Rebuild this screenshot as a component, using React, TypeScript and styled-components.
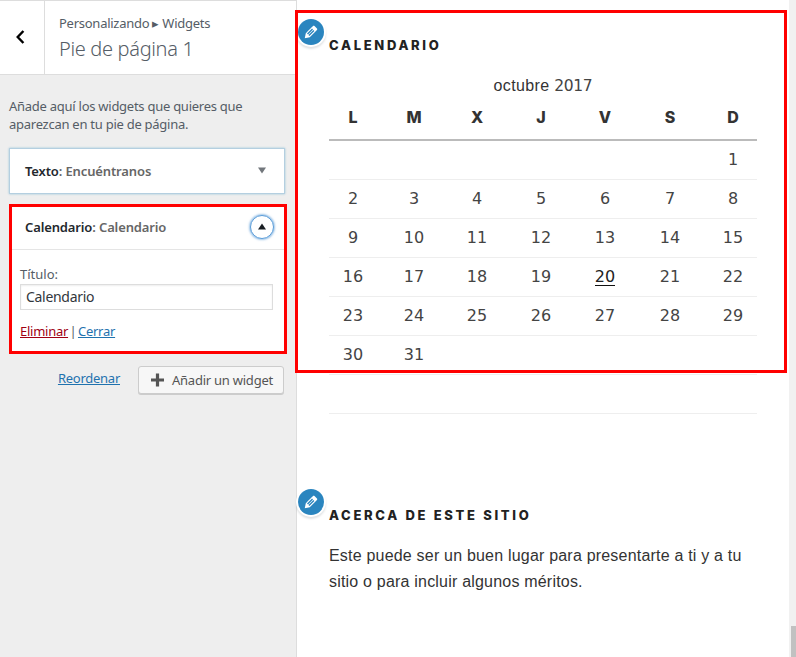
import React from "react";
import styled, { createGlobalStyle } from "styled-components";

const GlobalStyle = createGlobalStyle`
  *, *::before, *::after { box-sizing: border-box; }
  body { margin: 0; background: #fff; overflow: hidden; }
`;

const Page = styled.div`
  display: flex;
  width: 796px;
  height: 657px;
`;

const Sidebar = styled.aside`
  display: flex;
  flex-direction: column;
  width: 297px;
  flex: none;
  background: #eee;
  border-right: 1px solid #ddd;
  color: #555d66;
  font: 13px/18px "Noto Sans", "Open Sans", sans-serif;
  letter-spacing: -0.26px;
`;

const PanelHeader = styled.header`
  display: flex;
  height: 75px;
  flex: none;
  background: #fff;
  border: solid #ddd;
  border-width: 1px 0;
`;

const BackButton = styled.button`
  display: flex;
  align-items: center;
  width: 45px;
  padding: 0 0 2px 15px;
  background: #fff;
  border: 0;
  border-right: 1px solid #ddd;
`;

const PanelTitle = styled.div`
  padding: 13px 14px 0;
  white-space: nowrap;
`;

const PanelName = styled.h1`
  margin: 4px 0 0;
  font-size: 20px;
  font-weight: 300;
  line-height: 26px;
  letter-spacing: -0.33px;
`;

const Description = styled.p`
  margin: 22px 9px 15px;
  height: 36px;
  white-space: nowrap;
`;

const WidgetList = styled.div`
  display: flex;
  flex-direction: column;
  gap: 10px;
  padding-left: 9px;
`;

const WidgetCard = styled.section<{ $highlighted?: boolean }>`
  position: relative;
  width: 276px;
  background: #fff;
  border: 1px solid ${(p) => (p.$highlighted ? "#e5e5e5" : "#b4cfe0")};
  box-shadow: ${(p) => (p.$highlighted ? "none" : "0 0 2px rgba(30, 140, 190, 0.4)")};
`;

const MarkFrame = styled.div<{ $inset: string }>`
  position: absolute;
  inset: ${(p) => p.$inset};
  border: 3px solid #f00;
  pointer-events: none;
`;

const WidgetTop = styled.div<{ $open?: boolean }>`
  display: flex;
  align-items: center;
  justify-content: space-between;
  height: ${(p) => (p.$open ? "45px" : "44px")};
  padding: 0 10px 0 15px;
  border-bottom: ${(p) => (p.$open ? "1px solid #e5e5e5" : "0")};
`;

const WidgetName = styled.h2`
  margin: 0;
  font-size: 13px;
  font-weight: 600;
  color: #23282d;
  letter-spacing: -0.13px;
`;

const WidgetInstance = styled.span`
  color: #666;
`;

const Toggle = styled.button<{ $open?: boolean }>`
  display: flex;
  align-items: center;
  justify-content: center;
  width: 24px;
  height: 24px;
  padding: 0 0 1px;
  border-radius: 50%;
  background: ${(p) => (p.$open ? "#fff" : "none")};
  border: 1px solid ${(p) => (p.$open ? "#5b9dd9" : "transparent")};
  box-shadow: ${(p) => (p.$open ? "0 0 2px 1px rgba(91, 157, 217, 0.6)" : "none")};
`;

const WidgetForm = styled.div`
  display: flex;
  flex-direction: column;
  height: 101px;
  padding: 15px 10px 0;
`;

const FieldLabel = styled.label`
  letter-spacing: 0;
`;

const TitleInput = styled.input`
  width: 253px;
  height: 26px;
  margin: 1px 0 12px;
  padding: 0 5px 2px;
  border: 1px solid #ddd;
  box-shadow: inset 0 1px 2px rgba(0, 0, 0, 0.07);
  background: #fff;
  color: #32373c;
  font: 14px "Noto Sans", sans-serif;
  letter-spacing: -0.3px;
`;

const FormLinks = styled.div`
  display: flex;
  gap: 1.5px;
`;

const Link = styled.a<{ $danger?: boolean }>`
  color: ${(p) => (p.$danger ? "#a00014" : "#1f72ae")};
  text-decoration: underline;
`;

const Actions = styled.div`
  display: flex;
  justify-content: flex-end;
  align-items: flex-start;
  gap: 18px;
  padding: 14px 12px 0 0;
  line-height: 25px;
`;

const AddButton = styled.button`
  display: flex;
  align-items: center;
  gap: 8px;
  width: 146px;
  height: 28px;
  padding: 0 0 0 12px;
  border: 1px solid #ccc;
  border-radius: 3px;
  background: #f7f7f7;
  box-shadow: 0 1px 0 #ccc;
  color: #555;
  font: 13px "Noto Sans", sans-serif;
  letter-spacing: -0.24px;
  white-space: nowrap;
`;

const Preview = styled.main`
  flex: 1;
  padding: 10px 0 0;
  color: #333;
  font: 16px/26px "Liberation Sans", Arial, sans-serif;
`;

const PreviewWidget = styled.section<{ $height: number }>`
  position: relative;
  height: ${(p) => p.$height}px;
  padding: 25px 0 0 32px;
`;

const EditShortcut = styled.button`
  position: absolute;
  left: 1px;
  top: 9px;
  display: flex;
  align-items: center;
  justify-content: center;
  width: 26px;
  height: 26px;
  padding: 0;
  border: 0;
  border-radius: 50%;
  background: #2a85bf;
  box-shadow: 0 0 0 2px #fff, 0 2px 2px 2px rgba(46, 68, 83, 0.15);
`;

const PreviewTitle = styled.h2`
  margin: 0;
  color: #222;
  font: 800 13px/20px Inter, sans-serif;
  letter-spacing: 2.68px;
`;

const Calendar = styled.table`
  width: 428px;
  margin-top: 18px;
  border-collapse: separate;
  border-spacing: 0;
  table-layout: fixed;
  text-align: center;
`;

const Col = styled.col<{ $w: number }>`
  width: ${(p) => p.$w}px;
`;

const Caption = styled.caption`
  height: 26px;
  letter-spacing: 0.35px;
`;

const Year = styled.span`
  font-family: "DejaVu Sans", sans-serif;
  font-size: 15.5px;
  letter-spacing: -0.3px;
  line-height: 1;
  color: #444;
`;

const Digits = styled.span<{ $today?: boolean }>`
  display: inline-block;
  height: 19px;
  line-height: 19px;
  font-family: "DejaVu Sans", sans-serif;
  font-size: 16px;
  letter-spacing: 0;
  color: ${(p) => (p.$today ? "#222" : "#444")};
  border-bottom: ${(p) => (p.$today ? "1px solid #111" : "0")};
`;

const Weekday = styled.th`
  height: 42px;
  padding: 0 0 4px;
  border-bottom: 2px solid #bbb;
  font: 800 16px/26px Inter, sans-serif;
`;

const Day = styled.td`
  height: 39px;
  padding: 0;
  border-bottom: 1px solid #eee;
  line-height: 20px;
`;

const About = styled.p`
  margin: 18px 0 0;
  width: 430px;
  letter-spacing: 0.2px;
`;

const ScrollTrack = styled.div`
  display: flex;
  flex-direction: column;
  justify-content: flex-end;
  width: 7px;
  flex: none;
  padding-left: 2px;
  background: #f1f1f1;
`;

const ScrollThumb = styled.div`
  height: 31px;
  background: #c1c1c1;
`;

const Pencil = () => (
  <svg width="18" height="18" viewBox="0 0 20 20" fill="#fff">
    <path d="M13.89 3.39l2.71 2.72c.46.46.42 1.24.03 1.64l-8.01 8.02-5.56 1.16 1.16-5.58s7.6-7.63 7.99-8.03c.39-.39 1.22-.39 1.68.07zm-2.73 2.79l-5.59 5.61 1.11 1.11 5.54-5.65zm-2.97 8.23l5.58-5.6-1.07-1.08-5.59 5.6z" />
  </svg>
);

const Triangle = ({ up }: { up?: boolean }) => (
  <svg width="8" height="7" viewBox="0 0 8 7">
    <path
      d={up ? "M0 6.5 4 0.5 8 6.5Z" : "M0 0.5H8L4 6.5Z"}
      fill={up ? "#191e23" : "#72777c"}
    />
  </svg>
);

const weekdays = ["L", "M", "X", "J", "V", "S", "D"];
const columns = [48, 74, 52, 76, 52, 78, 48];
const weeks = Array.from({ length: 7 }, (_, w) =>
  Array.from({ length: 7 }, (_, d) => w * 7 + d - 5),
);

export default function App() {
  return (
    <Page>
      <GlobalStyle />
      <Sidebar>
        <PanelHeader>
          <BackButton aria-label="Volver">
            <svg width="10" height="14" viewBox="0 0 10 14">
              <path d="M8.4 1 2.7 7 8.4 13" fill="none" stroke="#000" strokeWidth="2.4" />
            </svg>
          </BackButton>
          <PanelTitle>
            Personalizando ▸ Widgets
            <PanelName>Pie de página 1</PanelName>
          </PanelTitle>
        </PanelHeader>
        <Description>
          Añade aquí los widgets que quieres que
          <br />
          aparezcan en tu pie de página.
        </Description>
        <WidgetList>
          <WidgetCard>
            <WidgetTop>
              <WidgetName>
                Texto<WidgetInstance>: Encuéntranos</WidgetInstance>
              </WidgetName>
              <Toggle><Triangle /></Toggle>
            </WidgetTop>
          </WidgetCard>
          <WidgetCard $highlighted>
            <WidgetTop $open>
              <WidgetName>
                Calendario<WidgetInstance>: Calendario</WidgetInstance>
              </WidgetName>
              <Toggle $open><Triangle up /></Toggle>
            </WidgetTop>
            <WidgetForm>
              <FieldLabel htmlFor="title">Título:</FieldLabel>
              <TitleInput id="title" defaultValue="Calendario" />
              <FormLinks>
                <Link $danger>Eliminar</Link>
                <span>|</span>
                <Link>Cerrar</Link>
              </FormLinks>
            </WidgetForm>
            <MarkFrame $inset="-1px -3px -3px -1px" />
          </WidgetCard>
        </WidgetList>
        <Actions>
          <Link>Reordenar</Link>
          <AddButton>
            <svg width="13" height="14" viewBox="0 0 13 14">
              <path d="M6.5 0.5V13.5M0 7H13" stroke="#555" strokeWidth="3.2" />
            </svg>
            Añadir un widget
          </AddButton>
        </Actions>
      </Sidebar>
      <Preview>
        <PreviewWidget $height={470}>
          <EditShortcut aria-label="Editar"><Pencil /></EditShortcut>
          <PreviewTitle>CALENDARIO</PreviewTitle>
          <Calendar>
            <Caption>octubre <Year>2017</Year></Caption>
            <colgroup>{columns.map((w, i) => <Col key={i} $w={w} />)}</colgroup>
            <thead>
              <tr>{weekdays.map((d) => <Weekday key={d}>{d}</Weekday>)}</tr>
            </thead>
            <tbody>
              {weeks.map((week, w) => (
                <tr key={w}>
                  {week.map((n) => (
                    <Day key={n}>{n > 0 && n < 32 && <Digits $today={n === 20}>{n}</Digits>}</Day>
                  ))}
                </tr>
              ))}
            </tbody>
          </Calendar>
          <MarkFrame $inset="0 2px 107px -2px" />
        </PreviewWidget>
        <PreviewWidget $height={160}>
          <EditShortcut aria-label="Editar"><Pencil /></EditShortcut>
          <PreviewTitle>ACERCA DE ESTE SITIO</PreviewTitle>
          <About>
            Este puede ser un buen lugar para presentarte a ti y a tu
            <br />
            sitio o para incluir algunos méritos.
          </About>
        </PreviewWidget>
      </Preview>
      <ScrollTrack><ScrollThumb /></ScrollTrack>
    </Page>
  );
}
